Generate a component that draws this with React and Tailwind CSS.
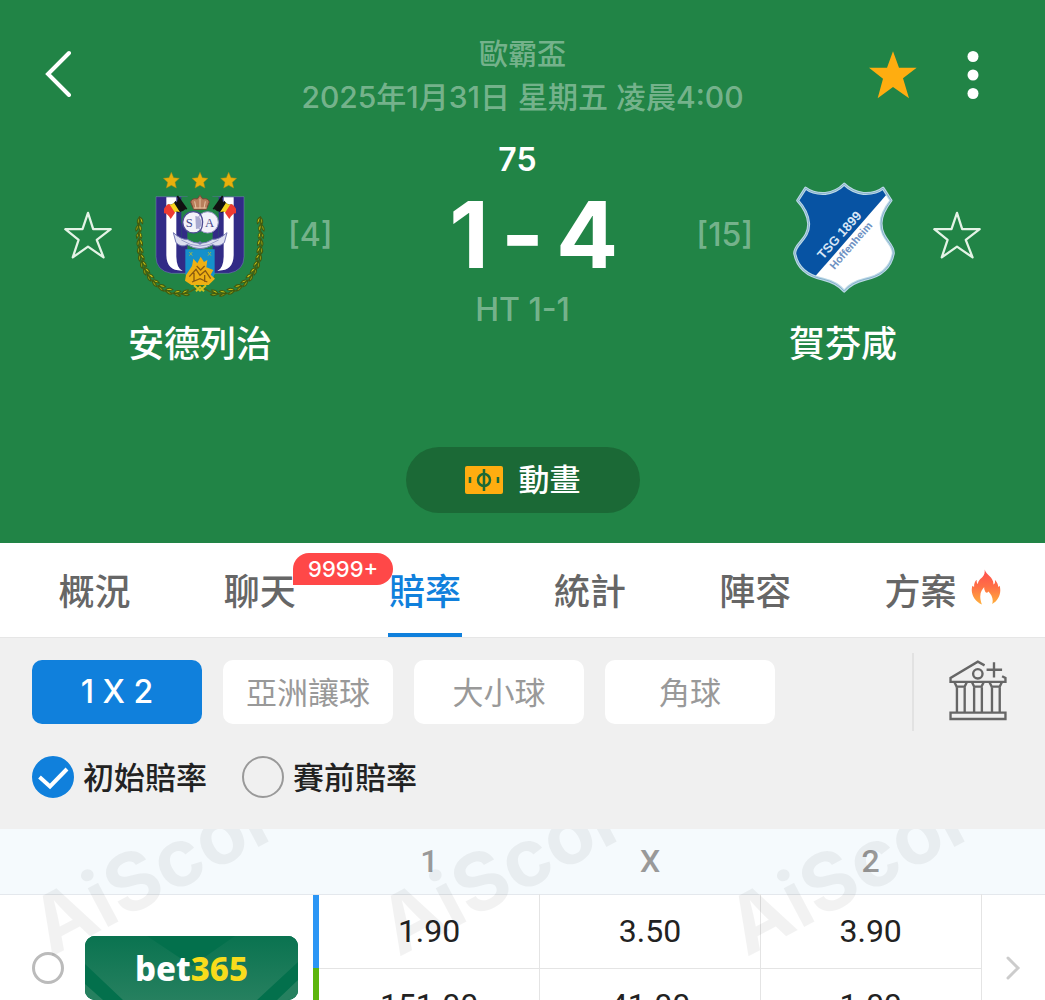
const TABS = [
  { id: "overview", label: "概況" },
  { id: "chat", label: "聊天", badge: "9999+" },
  { id: "odds", label: "賠率", active: true },
  { id: "stats", label: "統計" },
  { id: "lineup", label: "陣容" },
  { id: "tips", label: "方案", hot: true },
];

const MARKETS = ["1 X 2", "亞洲讓球", "大小球", "角球"];

const ODDS = [
  { id: "initial", bar: "bg-[#2b96f5]", values: ["1.90", "3.50", "3.90"] },
  { id: "live", bar: "bg-[#5cb50d]", values: ["151.00", "41.00", "1.00"] },
];

function StarOutline() {
  return (
    <svg viewBox="758 148 148 148" className="h-12 w-12" fill="none" stroke="#e4f3e6" strokeWidth="7">
      <path d="M832 154 848 204H902L859 237 880 291 832 258 785 291 803 237 762 204H815Z" strokeLinejoin="round" />
    </svg>
  );
}

function Laurel() {
  const left = [
    [66, 182, 85], [62, 204, 95], [63, 226, 90], [65, 248, 82], [66, 270, 78], [69, 292, 72], [75, 313, 66],
    [84, 333, 58], [96, 351, 48], [112, 368, 40], [131, 382, 28], [153, 393, 16], [178, 400, 6], [203, 399, -12],
  ];
  const branch = (
    <g>
      <path d="M65 178C60 290 82 402 185 402Q220 400 246 376" fill="none" stroke="#4f6212" strokeWidth="4" />
      {left.map(([x, y, a]) => (
        <g key={y} transform={`translate(${x} ${y}) rotate(${a})`}>
          <path d="M-11 0Q-4-12 10-7Q4 0-11 0Z" fill="#c4bf16" stroke="#3f5a10" strokeWidth="3" />
          <path d="M-11 1Q0 12 10 7Q3-1-11 1Z" fill="#8f9a14" stroke="#3f5a10" strokeWidth="3" />
        </g>
      ))}
    </g>
  );
  return (
    <>
      {branch}
      <g transform="matrix(-1 0 0 1 492 0)">{branch}</g>
    </>
  );
}

function Flag() {
  return (
    <g>
      <path d="M178 108 206 148" stroke="#111" strokeWidth="5" />
      <path d="M180 115Q194 128 204 146L194 154Q184 142 171 150Z" fill="#111" />
      <path d="M173 122 196 152 180 158Q166 147 156 160L149 133Q162 138 173 122Z" fill="#111" />
      <path d="M149 133Q160 137 168 128L186 157Q172 149 162 164Z" fill="#f6d51f" />
      <path d="M138 146Q146 133 154 132L171 158 158 177Q149 160 138 160Z" fill="#ee3a32" />
    </g>
  );
}

function AnderlechtCrest() {
  return (
    <svg viewBox="48 30 396 390" className="h-[130px] w-[132px]">
      {[160, 246, 332].map((x) => (
        <path
          key={x}
          transform={`translate(${x} 62)`}
          d="M0-25 7-9 24-7 11 5 15 22 0 14-15 22-11 5-24-7-7-9Z"
          fill="#e8b00c"
          stroke="#a98a14"
          strokeWidth="1.5"
        />
      ))}
      <Laurel />
      <g stroke="#7d86bb" strokeWidth="1.5">
        <path d="M114 110H208V340H160Q114 332 114 290Z" fill="#312b86" />
        <path d="M284 110H378V290Q378 332 332 340H284Z" fill="#312b86" />
      </g>
      <path d="M145 112H175V290Q176 326 194 332Q146 334 145 286Z" fill="#fff" />
      <path d="M347 112H317V290Q316 326 298 332Q346 334 347 286Z" fill="#fff" />
      <path d="M190 110H302V230H284V335H208V230H190Z" fill="#218446" />
      <path d="M190 190H208V330H190ZM284 190H302V330H284Z" fill="#312b86" />
      <Flag />
      <g transform="matrix(-1 0 0 1 492 0)">
        <Flag />
      </g>
      <path d="M227 148 218 126Q222 113 238 117L246 106 254 117Q270 113 274 126L265 148Z" fill="#b97f5c" stroke="#7a4636" strokeWidth="3" />
      <path d="M234 145 230 124M246 145V116M258 145 262 124M227 144H266" stroke="#e7c3a1" strokeWidth="3" />
      <circle cx="226" cy="187" r="32" fill="#f3f2fa" stroke="#4c4b93" strokeWidth="4" />
      <circle cx="269" cy="187" r="32" fill="#f3f2fa" stroke="#9894c4" strokeWidth="3" />
      <path d="M246 160Q262 187 246 215" fill="none" stroke="#4c4b93" strokeWidth="4" />
      <path d="M232 168Q248 168 250 187T234 207Z" fill="#a9a9cf" />
      <text x="203" y="200" fontSize="38" fontFamily="Liberation Serif, serif" fill="#474a8c">S</text>
      <text x="261" y="200" fontSize="38" fontFamily="Liberation Serif, serif" fill="#474a8c">A</text>
      <path d="M166 218Q190 240 208 238Q246 262 284 238Q302 240 327 218L319 248Q300 264 284 254Q246 278 208 254Q190 264 174 248Z" fill="#dcdff0" stroke="#7479b4" strokeWidth="3" />
      <path d="M190 240Q246 276 302 240" fill="none" stroke="#9da1cc" strokeWidth="3" />
      <circle cx="246" cy="249" r="5" fill="#7479b4" />
      <path d="M202 268H290V342Q284 368 246 374Q208 368 202 342Z" fill="#1590cb" />
      <path d="M214 276 223 287M223 276 214 287M270 276 279 287M279 276 270 287" stroke="#8fb25b" strokeWidth="3" />
      <path d="M204 345 222 318 226 296 238 310 248 290 258 306 268 300 265 322 286 330 278 344 291 356 272 375H220L201 362Z" fill="#eeb014" />
      <path d="M214 350 234 328 246 346 262 332 278 356M222 366 246 356 268 366M236 318 248 330 260 318M228 338V362M260 345V366" fill="none" stroke="#8a5a10" strokeWidth="4" />
      <path d="M228 376 246 392 264 376M234 394 246 380 258 394" fill="none" stroke="#d5c21b" strokeWidth="6" />
    </svg>
  );
}

function HoffenheimCrest() {
  const shield =
    "M487 72Q510 95 545 100Q582 102 604 84L628 121Q598 160 598 190C598 238 636 250 635 280C626 330 590 350 550 358Q508 368 487 394Q466 368 424 358C384 350 347 330 338 280C338 250 382 238 380 190Q378 155 347 121L371 84Q394 102 430 100Q465 95 487 72Z";
  return (
    <svg viewBox="330 30 310 390" className="h-[130px] w-[103px]">
      <clipPath id="shield">
        <path d={shield} />
      </clipPath>
      <path d={shield} fill="#fff" />
      <path d="M330 60H640L614 104 396 354 330 400Z" fill="#0753a3" clipPath="url(#shield)" />
      <path d={shield} fill="none" stroke="#bcd9e6" strokeWidth="9" strokeLinejoin="round" />
      <path d={shield} fill="none" stroke="#6b9cc0" strokeWidth="2" strokeLinejoin="round" />
      <g fontFamily="Liberation Sans, Arial, sans-serif" fontWeight="bold">
        <text transform="translate(423 300) rotate(-48)" fontSize="39" fill="#d8e6f6">TSG 1899</text>
        <text transform="translate(458 330) rotate(-49)" fontSize="32" fill="#6d91c2">Hoffenheim</text>
      </g>
    </svg>
  );
}

function BankIcon() {
  return (
    <svg viewBox="1284 362 174 184" className="mb-1 h-[62px] w-[59px]" fill="none" stroke="#666" strokeWidth="7">
      <path d="M1389 381 1369 370 1288 418V430H1451V418L1441 413" />
      <circle cx="1369" cy="406" r="14" />
      <path d="M1395 394H1441M1417 372V417" />
      <path d="M1300 432 1306 444H1330L1336 432M1352 432 1358 444H1380L1386 432M1404 432 1410 444H1434L1440 432" />
      <path d="M1307 446V520M1330 446V520M1358 446V520M1381 446V520M1411 446V520M1434 446V520" />
      <path d="M1288 521H1451V540H1288Z" />
    </svg>
  );
}

function Flame() {
  return (
    <svg viewBox="1348 86 88 104" className="h-9 w-[30px]">
      <defs>
        <linearGradient id="flame" x1="0" y1="0" x2="0" y2="1">
          <stop offset="0" stopColor="#ff4d4f" />
          <stop offset="0.5" stopColor="#ff7145" />
          <stop offset="1" stopColor="#ffb03c" />
        </linearGradient>
      </defs>
      <path
        d="M1388 87C1393 104 1414 108 1414 131C1419 128 1419 122 1418 117C1424 124 1427 129 1428 138L1432 134C1438 155 1430 177 1410 188C1415 172 1408 160 1399 151C1396 156 1391 156 1389 150C1387 145 1386 142 1387 138C1379 147 1369 160 1380 189C1359 180 1345 158 1352 134L1357 138C1357 128 1359 122 1365 117C1364 123 1365 126 1368 129C1370 110 1391 112 1388 87Z"
        fill="url(#flame)"
      />
    </svg>
  );
}

function Team({ name, rank, crest, away }) {
  const star = (
    <button type="button" aria-label={name} className="h-12 w-12">
      <StarOutline />
    </button>
  );
  const position = <span className="text-[32px] font-medium text-white/40">[{rank}]</span>;
  return (
    <div className={away ? "flex justify-end gap-[18px] pr-16" : "flex gap-4 pl-16"}>
      <div className="flex h-[130px] items-center">{away ? position : star}</div>
      <div className="flex w-36 flex-col items-center">
        {crest}
        <h2 className="mt-5 text-[36px] leading-[48px] font-medium whitespace-nowrap">{name}</h2>
      </div>
      <div className="flex h-[130px] items-center">{away ? star : position}</div>
    </div>
  );
}

function Header() {
  return (
    <header className="bg-[#218446] pt-8 pb-[30px] text-white">
      <div className="grid grid-cols-[1fr_auto_1fr] items-center">
        <button type="button" aria-label="返回" className="mb-1 ml-11 w-fit">
          <svg viewBox="0 0 30 48" className="h-12 w-[30px]" fill="none" stroke="#fff" strokeWidth="4" strokeLinecap="round">
            <path d="M25 4 4 25 25 46" />
          </svg>
        </button>
        <div className="pt-0.5 text-center text-[29px] leading-[42px] font-medium text-white/40">
          <p>歐霸盃</p>
          <p className="text-[30px]">2025年1月31日 星期五 凌晨4:00</p>
        </div>
        <div className="mr-[66px] flex items-center justify-end gap-[50px]">
          <button type="button" aria-label="收藏">
            <svg viewBox="59 60 144 142" className="h-12 w-12" fill="#ffad10">
              <path d="M131 60 149 109H202L161 141 179 201 131 167 85 201 101 142 59 109H113Z" />
            </svg>
          </button>
          <button type="button" aria-label="更多">
            <svg viewBox="0 0 12 48" className="h-12 w-3" fill="#fff">
              <circle cx="6" cy="5.5" r="5.5" />
              <circle cx="6" cy="24" r="5.5" />
              <circle cx="6" cy="42.5" r="5.5" />
            </svg>
          </button>
        </div>
      </div>

      <div className="grid grid-cols-[1fr_auto_1fr]">
        <div className="pt-[52px]">
          <Team name="安德列治" rank={4} crest={<AnderlechtCrest />} />
        </div>
        <div className="pt-[22px] text-center">
          <p className="pr-2.5 text-[32px] leading-10 font-semibold">75</p>
          <p className="grid grid-cols-[1fr_auto_1fr] gap-3 text-[92px] leading-[110px] font-bold">
            <span className="text-right">1</span>
            <span>-</span>
            <span className="text-left">4</span>
          </p>
          <p className="text-[32px] leading-10 font-medium text-white/40">HT 1-1</p>
        </div>
        <div className="pt-[52px]">
          <Team name="賀芬咸" rank={15} crest={<HoffenheimCrest />} away />
        </div>
      </div>

      <button
        type="button"
        className="mx-auto mt-[79px] flex h-[66px] w-[234px] items-center justify-center gap-4 rounded-full bg-[#1b6936] text-[31px] font-medium"
      >
        <svg viewBox="0 0 38 28" className="h-7 w-[38px]">
          <rect width="38" height="28" rx="2" fill="#ffad10" />
          <g fill="none" stroke="#1b6936" strokeWidth="2.5">
            <circle cx="19" cy="14" r="6" />
            <path d="M19 3V25M5 11V17M33 11V17" />
          </g>
        </svg>
        動畫
      </button>
    </header>
  );
}

function Tabs() {
  return (
    <nav className="grid grid-cols-6 bg-white pr-[42px] pl-3">
      {TABS.map((tab) => (
        <a key={tab.id} href={`#${tab.id}`} className="relative flex justify-center">
          <span
            className={
              tab.active
                ? "h-[94px] border-b-4 border-[#1080dc] px-px text-[36px] leading-[98px] font-medium text-[#1080dc]"
                : "h-[94px] text-[36px] leading-[98px] font-medium text-[#666]"
            }
          >
            {tab.label}
          </span>
          {tab.badge && (
            <span className="absolute top-2.5 left-[116px] z-10 flex h-8 w-[100px] items-center justify-center rounded-2xl rounded-bl-none bg-[#ff4848] text-[22px] font-medium text-white">
              {tab.badge}
            </span>
          )}
          {tab.hot && (
            <span className="absolute top-[26px] left-[133px]">
              <Flame />
            </span>
          )}
        </a>
      ))}
    </nav>
  );
}

function Filters() {
  return (
    <section className="border-t border-[#e6e6e6] bg-[#f0f0f0] pt-[15px] pb-[31px] pl-8">
      <div className="flex h-[78px] items-center">
        <div className="flex gap-[21px]">
          {MARKETS.map((market, i) => (
            <button
              key={market}
              type="button"
              className={
                i === 0
                  ? "h-16 w-[170px] rounded-[10px] bg-[#1080dc] text-[32px] font-medium text-white"
                  : "h-16 w-[170px] rounded-[10px] bg-white pt-0.5 text-[31px] text-[#999]"
              }
            >
              {market}
            </button>
          ))}
        </div>
        <button type="button" aria-label="公司" className="ml-auto flex h-[78px] items-center border-l-2 border-[#e2e2e2] pr-[37px] pl-[35px]">
          <BankIcon />
        </button>
      </div>
      <div className="mt-[25px] flex gap-[35px] text-[31px] leading-[44px] font-medium text-[#222]">
        <label className="flex h-[42px] gap-[9px]">
          <span className="relative h-[42px] w-[42px]">
            <input
              type="radio"
              name="period"
              defaultChecked
              className="peer block h-[42px] w-[42px] appearance-none rounded-full border-2 border-[#999] checked:border-[#1080dc] checked:bg-[#1080dc]"
            />
            <svg viewBox="0 0 42 42" className="pointer-events-none absolute inset-0 hidden peer-checked:block" fill="none" stroke="#fff" strokeWidth="4">
              <path d="M7.5 21 18 30.5 35 13" />
            </svg>
          </span>
          初始賠率
        </label>
        <label className="flex h-[42px] gap-[9px]">
          <input
            type="radio"
            name="period"
            className="block h-[42px] w-[42px] appearance-none rounded-full border-2 border-[#999] checked:border-[#1080dc] checked:bg-[#1080dc]"
          />
          賽前賠率
        </label>
      </div>
    </section>
  );
}

function Bet365() {
  return (
    <div className="relative flex h-16 w-[213px] items-center justify-center overflow-hidden rounded-[10px] bg-[#03704c]">
      <svg viewBox="0 0 213 64" preserveAspectRatio="none" className="absolute inset-0 h-full w-full">
        <defs>
          <linearGradient id="felt" x1="0" y1="0" x2="0" y2="1">
            <stop offset="0" stopColor="#0a7350" />
            <stop offset="1" stopColor="#26805f" />
          </linearGradient>
        </defs>
        <rect width="213" height="64" fill="#03704c" />
        <path d="M0 0H62L107 30 150 0H213V26L172 64H38L0 28Z" fill="url(#felt)" />
        <path d="M0 48V64H18ZM213 44V64H192Z" fill="#26805f" />
      </svg>
      <span className="relative font-['Noto_Sans',sans-serif] text-[33px] leading-none font-extrabold">
        <span className="text-white">bet</span>
        <span className="text-[#f8dc1c]">365</span>
      </span>
    </div>
  );
}

function OddsTable() {
  return (
    <section className="relative overflow-hidden bg-white font-[Roboto,sans-serif]">
      <table className="w-full table-fixed border-collapse text-center text-[32px] text-[#222]">
        <colgroup>
          <col className="w-[313px]" />
          <col className="w-[6px]" />
          <col />
          <col />
          <col />
          <col className="w-16" />
        </colgroup>
        <thead>
          <tr className="h-[65px] border-b border-[#e4e8ed] bg-[#f5fafd] text-[#999]">
            <td colSpan={2} />
            <th className="font-medium">1</th>
            <th className="font-medium">X</th>
            <th className="font-medium">2</th>
            <td />
          </tr>
        </thead>
        <tbody>
          {ODDS.map((row, i) => (
            <tr key={row.id} className="h-[74px]">
              {i === 0 && (
                <td rowSpan={2}>
                  <div className="flex items-center gap-[21px] pl-8">
                    <input type="radio" name="company" aria-label="bet365" className="h-8 w-8 appearance-none rounded-full border-[3px] border-[#bbb] bg-white" />
                    <Bet365 />
                  </div>
                </td>
              )}
              <td className={row.bar} />
              {row.values.map((value) => (
                <td key={value} className="border-r border-b border-[#e4e4e4]">
                  {value}
                </td>
              ))}
              {i === 0 && (
                <td rowSpan={2}>
                  <svg viewBox="0 0 16 24" className="mx-auto h-6 w-4" fill="none" stroke="#ccc" strokeWidth="3" strokeLinecap="round">
                    <path d="M3 2 13 12 3 22" />
                  </svg>
                </td>
              )}
            </tr>
          ))}
        </tbody>
      </table>
      <div aria-hidden="true" className="pointer-events-none absolute top-0 left-14 flex font-[Inter,sans-serif] text-[80px] leading-none font-bold text-black/5">
        {[0, 1, 2].map((n) => (
          <div key={n} className="h-[138px] w-[348px]">
            <div className="flex h-full origin-bottom-left -rotate-28 items-end">AiScore</div>
          </div>
        ))}
      </div>
    </section>
  );
}

export default function App() {
  return (
    <main className="h-screen overflow-hidden bg-white font-[Inter,'Noto_Sans_CJK_TC',sans-serif]">
      <Header />
      <Tabs />
      <Filters />
      <OddsTable />
    </main>
  );
}
